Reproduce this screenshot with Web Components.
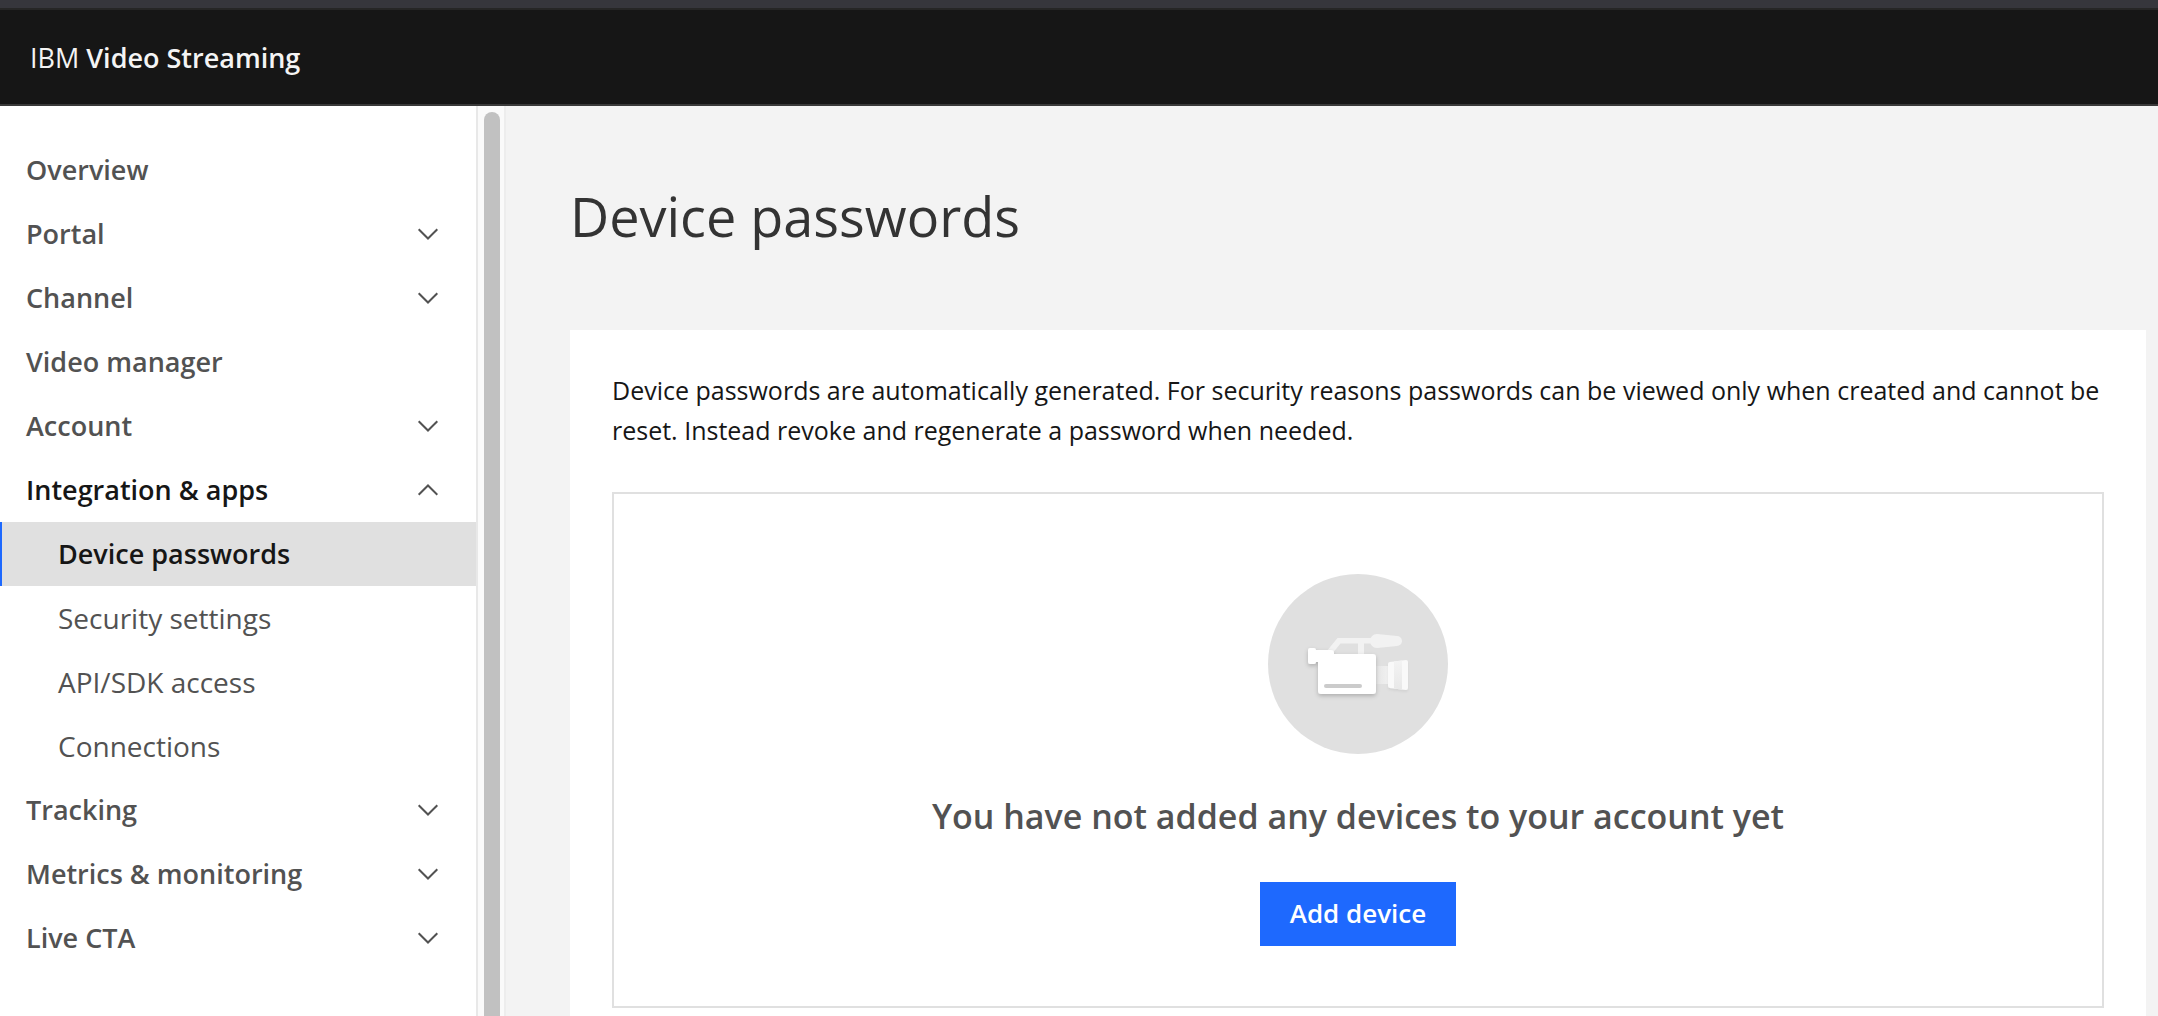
<!DOCTYPE html>
<html lang="en">
<head>
<meta charset="utf-8">
<title>Device passwords</title>
<style>
  html, body { margin: 0; height: 100%; }
  body {
    font-family: "Open Sans", "Noto Sans", sans-serif;
    color: #161616;
    background: #f3f3f3;
    overflow: hidden;
    --grey-text: #525252;
    --line: #e0e0e0;
    --blue: #1e69fe;
  }
</style>
</head>
<body>
<app-shell>
  <app-header slot="header" prefix="IBM">Video Streaming</app-header>
  <side-nav slot="nav">
    <nav-item href="#overview">Overview</nav-item>
    <nav-group>Portal</nav-group>
    <nav-group>Channel</nav-group>
    <nav-item href="#video-manager">Video manager</nav-item>
    <nav-group>Account</nav-group>
    <nav-group open>Integration &amp; apps
      <nav-item slot="items" sub current href="#device-passwords">Device passwords</nav-item>
      <nav-item slot="items" sub href="#security">Security settings</nav-item>
      <nav-item slot="items" sub href="#api">API/SDK access</nav-item>
      <nav-item slot="items" sub href="#connections">Connections</nav-item>
    </nav-group>
    <nav-group>Tracking</nav-group>
    <nav-group>Metrics &amp; monitoring</nav-group>
    <nav-group>Live CTA</nav-group>
  </side-nav>
  <page-panel heading="Device passwords">
    <span slot="intro">Device passwords are automatically generated. For security reasons passwords can be viewed only when created and cannot be reset. Instead revoke and regenerate a password when needed.</span>
    <empty-state action="Add device">
      <camera-art slot="art"></camera-art>
      You have not added any devices to your account yet
    </empty-state>
  </page-panel>
</app-shell>

<script>
  const define = (name, render) => customElements.define(name, class extends HTMLElement {
    connectedCallback() {
      if (this.shadowRoot) return;
      this.attachShadow({ mode: 'open' }).innerHTML = render(this);
    }
  });

  define('app-shell', () => `
    <style>
      :host { display: flex; flex-direction: column; height: 100vh; overflow: hidden; }
      .body { display: flex; flex: 1; min-height: 0; }
      main { flex: 1; min-width: 0; overflow: hidden; }
    </style>
    <slot name="header"></slot>
    <div class="body"><slot name="nav"></slot><main><slot></slot></main></div>`);

  define('app-header', el => `
    <style>
      :host { display: block; border-top: 8px solid #36363c; }
      header {
        display: flex; align-items: center; height: 92px; padding: 2px 30px 0;
        background: #161616; color: #f4f4f4;
        border-top: 2px solid #262626; border-bottom: 2px solid #393939;
      }
      a { color: inherit; text-decoration: none; font-size: 27px; line-height: 36px; font-weight: 600; }
      span { font-weight: 400; }
    </style>
    <header><a href="#home"><span>${el.getAttribute('prefix')}</span> <slot></slot></a></header>`);

  define('side-nav', () => `
    <style>
      :host { display: flex; flex: none; background: #fff; }
      nav { width: 476px; padding-top: 32px; box-sizing: border-box; overflow: hidden; }
      .track {
        display: flex; width: 20px; padding: 6px 0 0 6px; background: #fafafa;
        border-left: 2px solid #e8e8e8; border-right: 2px solid #ededed;
      }
      .thumb { width: 16px; background: #c1c1c1; border-radius: 8px 8px 0 0; }
    </style>
    <nav aria-label="Main"><slot></slot></nav>
    <div class="track" aria-hidden="true"><div class="thumb"></div></div>`);

  define('nav-item', () => `
    <style>
      :host { display: block; }
      a {
        display: flex; align-items: center; height: 64px; padding: 0 36px 0 24px;
        border-left: 2px solid transparent;
        color: var(--grey-text); text-decoration: none;
        font-size: 27px; line-height: 36px; font-weight: 600;
      }
      :host([sub]) a { padding-left: 56px; font-size: 28px; font-weight: 400; }
      :host([current]) a {
        color: #161616; font-size: 27px; font-weight: 600;
        background: var(--line); border-left-color: var(--blue);
      }
    </style>
    <a><slot></slot></a>`);
  document.querySelectorAll('nav-item').forEach(item => {
    const link = item.shadowRoot.querySelector('a');
    link.href = item.getAttribute('href');
    if (item.hasAttribute('current')) link.setAttribute('aria-current', 'page');
  });

  define('nav-group', el => `
    <style>
      :host { display: block; }
      button {
        display: flex; align-items: center; justify-content: space-between;
        width: 100%; height: 64px; padding: 0 37px 0 26px; border: 0; background: none;
        color: var(--grey-text); font: inherit; font-size: 27px; line-height: 36px; font-weight: 600;
        text-align: left; cursor: pointer;
      }
      :host([open]) button { color: #161616; }
      svg { display: block; }
      :host([open]) svg { transform: rotate(180deg); }
    </style>
    <button type="button" aria-expanded="${el.hasAttribute('open')}">
      <span><slot></slot></span>
      <svg width="22" height="12" viewBox="0 0 22 12" fill="none" stroke="#525252" stroke-width="2" aria-hidden="true"><path d="M1.7 1.2 11 10.5l9.3-9.3"/></svg>
    </button>
    <slot name="items"></slot>`);

  define('page-panel', el => `
    <style>
      :host { display: block; padding: 74px 12px 0 64px; }
      h1 { margin: 0 0 78px; font-size: 54px; line-height: 72px; font-weight: 400; color: #333; }
      section { padding: 40px 42px 80px; background: #fff; }
      p { margin: 0 0 42px; font-size: 25px; line-height: 40px; }
    </style>
    <h1>${el.getAttribute('heading')}</h1>
    <section><p><slot name="intro"></slot></p><slot></slot></section>`);

  define('empty-state', el => `
    <style>
      :host {
        display: flex; flex-direction: column; align-items: center;
        padding: 80px 24px 60px; border: 2px solid var(--line);
      }
      h2 { margin: 38px 0 42px; font-size: 34px; line-height: 48px; font-weight: 600; color: var(--grey-text); }
      button {
        height: 64px; padding: 0 30px 2px; border: 0; background: var(--blue); color: #fff;
        font: inherit; font-size: 26px; line-height: 36px; font-weight: 600; cursor: pointer;
      }
    </style>
    <slot name="art"></slot>
    <h2><slot></slot></h2>
    <button type="button">${el.getAttribute('action')}</button>`);

  define('camera-art', () => `
    <style>:host { display: block; } svg { display: block; }</style>
    <svg width="180" height="180" viewBox="0 0 180 180" aria-hidden="true">
      <defs>
        <linearGradient id="barrel"><stop stop-color="#e4e4e4"/><stop offset="1" stop-color="#f2f2f2"/></linearGradient>
        <linearGradient id="hood" x2="0" y2="1"><stop stop-color="#f3f3f3"/><stop offset="1" stop-color="#e8e8e8"/></linearGradient>
        <filter id="shade" x="-20%" y="-20%" width="140%" height="150%">
          <feDropShadow dx="0" dy="2" stdDeviation="2" flood-color="#000" flood-opacity=".22"/>
        </filter>
        <filter id="soft" x="-20%" y="-20%" width="140%" height="150%">
          <feDropShadow dx="0" dy="2" stdDeviation="1" flood-color="#000" flood-opacity=".06"/>
        </filter>
      </defs>
      <circle cx="90" cy="90" r="90" fill="#e0e0e0"/>
      <path d="M58 78 69.500 64H104v5.500H96V82h-6V69.500H72.500L64 80z" fill="#f2f2f2"/>
      <path d="M109 60 129 62a5 5 0 0 1 0 10L109 74c-4 0-7-3.500-7-7s3-7 7-7z" fill="#f2f2f2"/>
      <path d="M106 92h16v18h-16z" fill="url(#barrel)"/>
      <g filter="url(#soft)">
        <path d="M122 88l16-2a2 2 0 0 1 2 2v26a2 2 0 0 1-2 2l-16-2a2 2 0 0 1-2-2V90a2 2 0 0 1 2-2z" fill="#f9f9f9"/>
        <path d="M126 87.500 134 86.500v29l-8-1z" fill="url(#hood)"/>
      </g>
      <g filter="url(#shade)">
        <path d="M42 74h4a2 2 0 0 1 2 2h15a3 3 0 0 1 3 3v1h39a3 3 0 0 1 3 3v34a3 3 0 0 1-3 3H53a3 3 0 0 1-3-3V88h-2a2 2 0 0 1-2 2h-4a2 2 0 0 1-2-2V76a2 2 0 0 1 2-2z" fill="#fff"/>
      </g>
      <rect x="56" y="110" width="38" height="4" rx="2" fill="#cbcbcb"/>
    </svg>`);
</script>
</body>
</html>
